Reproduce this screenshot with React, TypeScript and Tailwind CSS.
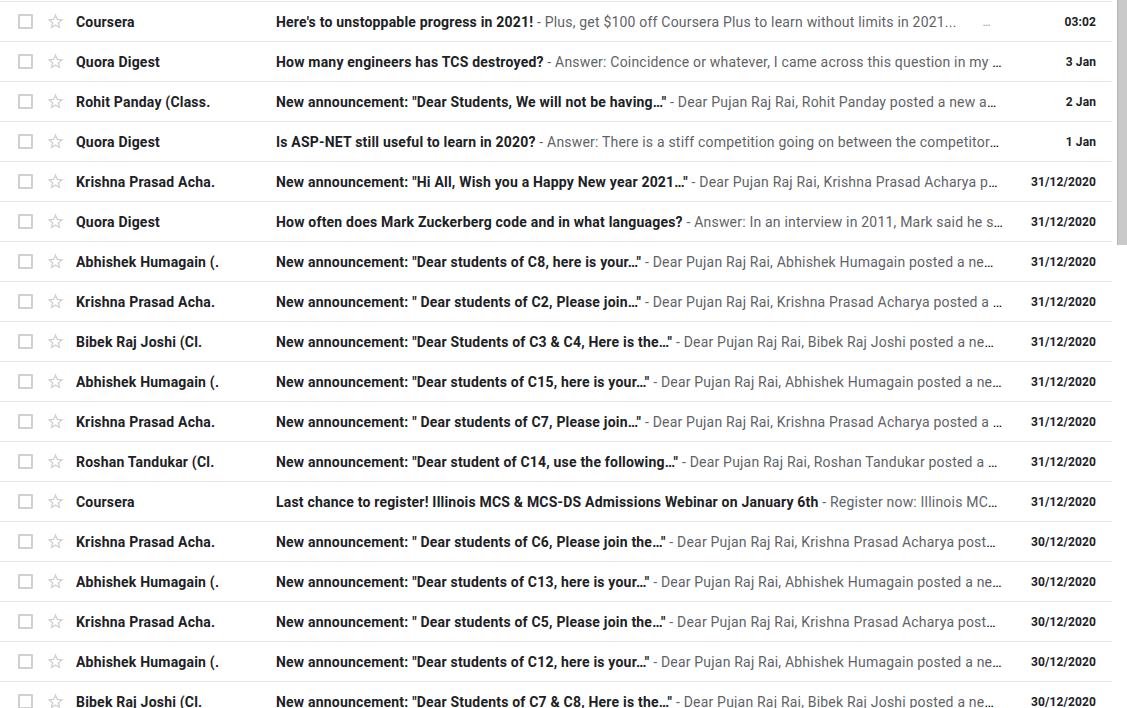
import React from "react";

type Mail = {
  from: string;
  subject: string;
  snippet: string;
  date: string;
  more?: boolean;
};

const mails: Mail[] = [
  {
    from: "Coursera",
    subject: "Here's to unstoppable progress in 2021!",
    snippet: "Plus, get $100 off Coursera Plus to learn without limits in 2021...",
    date: "03:02",
    more: true,
  },
  {
    from: "Quora Digest",
    subject: "How many engineers has TCS destroyed?",
    snippet: "Answer: Coincidence or whatever, I came across this question in my feed today and it made me think",
    date: "3 Jan",
  },
  {
    from: "Rohit Panday (Class.",
    subject: 'New announcement: "Dear Students, We will not be having…"',
    snippet: "Dear Pujan Raj Rai, Rohit Panday posted a new announcement in C8",
    date: "2 Jan",
  },
  {
    from: "Quora Digest",
    subject: "Is ASP-NET still useful to learn in 2020?",
    snippet: "Answer: There is a stiff competition going on between the competitors of the market",
    date: "1 Jan",
  },
  {
    from: "Krishna Prasad Acha.",
    subject: 'New announcement: "Hi All, Wish you a Happy New year 2021…"',
    snippet: "Dear Pujan Raj Rai, Krishna Prasad Acharya posted a new announcement",
    date: "31/12/2020",
  },
  {
    from: "Quora Digest",
    subject: "How often does Mark Zuckerberg code and in what languages?",
    snippet: "Answer: In an interview in 2011, Mark said he still codes",
    date: "31/12/2020",
  },
  {
    from: "Abhishek Humagain (.",
    subject: 'New announcement: "Dear students of C8, here is your…"',
    snippet: "Dear Pujan Raj Rai, Abhishek Humagain posted a new announcement",
    date: "31/12/2020",
  },
  {
    from: "Krishna Prasad Acha.",
    subject: 'New announcement: " Dear students of C2, Please join…"',
    snippet: "Dear Pujan Raj Rai, Krishna Prasad Acharya posted a new announcement",
    date: "31/12/2020",
  },
  {
    from: "Bibek Raj Joshi (Cl.",
    subject: 'New announcement: "Dear Students of C3 & C4, Here is the…"',
    snippet: "Dear Pujan Raj Rai, Bibek Raj Joshi posted a new announcement",
    date: "31/12/2020",
  },
  {
    from: "Abhishek Humagain (.",
    subject: 'New announcement: "Dear students of C15, here is your…"',
    snippet: "Dear Pujan Raj Rai, Abhishek Humagain posted a new announcement",
    date: "31/12/2020",
  },
  {
    from: "Krishna Prasad Acha.",
    subject: 'New announcement: " Dear students of C7, Please join…"',
    snippet: "Dear Pujan Raj Rai, Krishna Prasad Acharya posted a new announcement",
    date: "31/12/2020",
  },
  {
    from: "Roshan Tandukar (Cl.",
    subject: 'New announcement: "Dear student of C14, use the following…"',
    snippet: "Dear Pujan Raj Rai, Roshan Tandukar posted a new announcement",
    date: "31/12/2020",
  },
  {
    from: "Coursera",
    subject: "Last chance to register! Illinois MCS & MCS-DS Admissions Webinar on January 6th",
    snippet: "Register now: Illinois MCS and MCS-DS",
    date: "31/12/2020",
  },
  {
    from: "Krishna Prasad Acha.",
    subject: 'New announcement: " Dear students of C6, Please join the…"',
    snippet: "Dear Pujan Raj Rai, Krishna Prasad Acharya posted a new announcement",
    date: "30/12/2020",
  },
  {
    from: "Abhishek Humagain (.",
    subject: 'New announcement: "Dear students of C13, here is your…"',
    snippet: "Dear Pujan Raj Rai, Abhishek Humagain posted a new announcement",
    date: "30/12/2020",
  },
  {
    from: "Krishna Prasad Acha.",
    subject: 'New announcement: " Dear students of C5, Please join the…"',
    snippet: "Dear Pujan Raj Rai, Krishna Prasad Acharya posted a new announcement",
    date: "30/12/2020",
  },
  {
    from: "Abhishek Humagain (.",
    subject: 'New announcement: "Dear students of C12, here is your…"',
    snippet: "Dear Pujan Raj Rai, Abhishek Humagain posted a new announcement",
    date: "30/12/2020",
  },
  {
    from: "Bibek Raj Joshi (Cl.",
    subject: 'New announcement: "Dear Students of C7 & C8, Here is the…"',
    snippet: "Dear Pujan Raj Rai, Bibek Raj Joshi posted a new announcement",
    date: "30/12/2020",
  },
];

function StarIcon() {
  return (
    <svg width="19" height="19" viewBox="0 0 24 24" className="shrink-0">
      <path
        fill="#d0d0d0"
        d="M22 9.24l-7.19-.62L12 2 9.19 8.63 2 9.24l5.46 4.73L5.82 21 12 17.27 18.18 21l-1.63-7.03L22 9.24zM12 15.4l-3.76 2.27 1-4.28-3.32-2.88 4.38-.38L12 6.1l1.71 4.04 4.38.38-3.32 2.88 1 4.28L12 15.4z"
      />
    </svg>
  );
}

function Row({ mail }: { mail: Mail }) {
  return (
    <div className="flex h-10 min-w-0 items-center border-t border-[#e8e8e8] pl-[18px] text-sm tracking-[0.2px]">
      <div className="h-[15px] w-[15px] shrink-0 rounded-[1px] border-2 border-[#d0d0d0]" />
      <div className="ml-[13px]">
        <StarIcon />
      </div>
      <div className="ml-[11px] w-[200px] shrink-0 truncate font-bold text-[#202124]">
        {mail.from}
      </div>
      <div className="flex min-w-0 flex-1 items-center">
        <div className="min-w-0 truncate">
          <span className="font-bold text-[#202124]">{mail.subject}</span>
          <span className="text-[#5f6368]"> - {mail.snippet}</span>
        </div>
        {mail.more && (
          <span className="ml-[26px] shrink-0 text-xs text-[#9a9a9a]">…</span>
        )}
      </div>
      <div className="w-[109px] shrink-0 pr-4 text-right text-xs font-bold tracking-[0.1px] text-[#202124]">
        {mail.date}
      </div>
    </div>
  );
}

export default function App() {
  return (
    <div
      className="flex h-[708px] w-[1127px] overflow-hidden bg-white"
      style={{ fontFamily: "Roboto, 'Liberation Sans', sans-serif" }}
    >
      <div className="min-w-0 flex-1 pt-px pr-[5px]">
        {mails.map((m, i) => (
          <Row key={i} mail={m} />
        ))}
      </div>
      <div className="w-[10px] shrink-0">
        <div className="h-[245px] border-l border-[#b4b4b4] bg-[#c9c9c9]" />
      </div>
    </div>
  );
}
